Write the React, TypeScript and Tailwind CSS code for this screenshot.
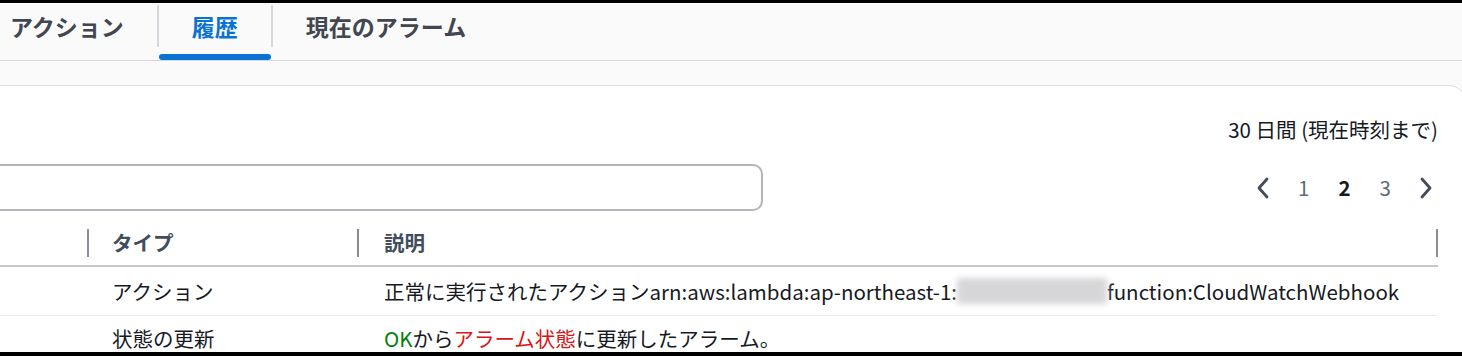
const font = { fontFamily: '"Noto Sans CJK JP", "Noto Sans", sans-serif' };

const tabs = [
  { label: 'アクション', active: false },
  { label: '履歴', active: true },
  { label: '現在のアラーム', active: false },
];

function Divider({ right = false }: { right?: boolean }) {
  return (
    <span
      className={`absolute top-1/2 h-[28px] w-[2px] -translate-y-1/2 bg-[#8c8c94] ${right ? 'right-0' : 'left-0'}`}
    />
  );
}

function Chevron({ dir }: { dir: 'left' | 'right' }) {
  return (
    <svg width="12" height="22" viewBox="0 0 12 22" fill="none" className="text-[#414d5c]">
      <path
        d={dir === 'left' ? 'M10 2 L2 11 L10 20' : 'M2 2 L10 11 L2 20'}
        stroke="currentColor"
        strokeWidth="2.8"
        strokeLinecap="round"
        strokeLinejoin="round"
      />
    </svg>
  );
}

export default function App() {
  return (
    <div
      className="h-[356px] w-[1462px] overflow-hidden border-t-[3px] border-b-4 border-black bg-[#fafafa] text-[#16191f]"
      style={font}
    >
      {/* Tabs */}
      <div className="flex h-[58px] border-b border-[#d5d8dc]">
        <div className="-ml-[23px] flex">
          {tabs.map((tab, i) => (
            <div key={tab.label} className="flex items-stretch">
              {i > 0 && <div className="mt-[2px] h-[42px] w-[2px] bg-[#d5d8dc]" />}
              <div className="relative flex flex-col">
                <div
                  className={`flex h-[46px] items-center px-[33px] text-[23px] font-bold ${
                    tab.active ? 'text-[#0972d3]' : 'text-[#424650]'
                  }`}
                >
                  {tab.label}
                </div>
                {tab.active && <div className="mt-[5px] h-[6px] rounded-full bg-[#0972d3]" />}
              </div>
            </div>
          ))}
        </div>
      </div>

      {/* Card */}
      <div className="mt-[24px] -ml-[40px] w-[1508px] rounded-tr-[20px] border border-[#dcdde0] bg-white pl-[20px] pr-[29px] pt-[27px]">
        <div className="flex justify-end text-[20.5px] leading-[32px]">30 日間 (現在時刻まで)</div>

        <div className="mt-[19px] flex items-center justify-between">
          <div className="h-[47px] w-[782px] rounded-[10px] border-2 border-[#b4b4bb] bg-white" />
          <div className="flex items-center gap-[29px] pr-[6px] text-[20.5px] text-[#5f6b7a]">
            <Chevron dir="left" />
            <span>1</span>
            <span className="font-bold text-[#16191f]">2</span>
            <span>3</span>
            <Chevron dir="right" />
          </div>
        </div>

        {/* Table */}
        <div className="mt-[9px] text-[20.5px]">
          <div className="grid h-[47px] grid-cols-[106px_270px_1fr] items-center border-b-2 border-[#c6c6cd] font-bold text-[#414d5c]">
            <div />
            <div className="relative flex h-full items-center pl-[25px]">
              <Divider />
              タイプ
            </div>
            <div className="relative flex h-full items-center pl-[27px]">
              <Divider />
              説明
              <Divider right />
            </div>
          </div>
          <div className="grid h-[49px] grid-cols-[106px_270px_1fr] items-center border-b border-[#e9ebed]">
            <div />
            <div className="pl-[25px]">アクション</div>
            <div className="flex items-center whitespace-nowrap pl-[27px]">
              正常に実行されたアクションarn:aws:lambda:ap-northeast-1:
              <span className="inline-block h-[26px] w-[150px] bg-[#d6d6d8] blur-[3px]" />
              function:CloudWatchWebhook
            </div>
          </div>
          <div className="grid h-[44px] grid-cols-[106px_270px_1fr] items-center">
            <div />
            <div className="pl-[25px]">状態の更新</div>
            <div className="whitespace-nowrap pl-[27px]">
              <span className="text-[#037f0c]">OK</span>から
              <span className="text-[#d91515]">アラーム状態</span>に更新したアラーム。
            </div>
          </div>
        </div>
      </div>
    </div>
  );
}
